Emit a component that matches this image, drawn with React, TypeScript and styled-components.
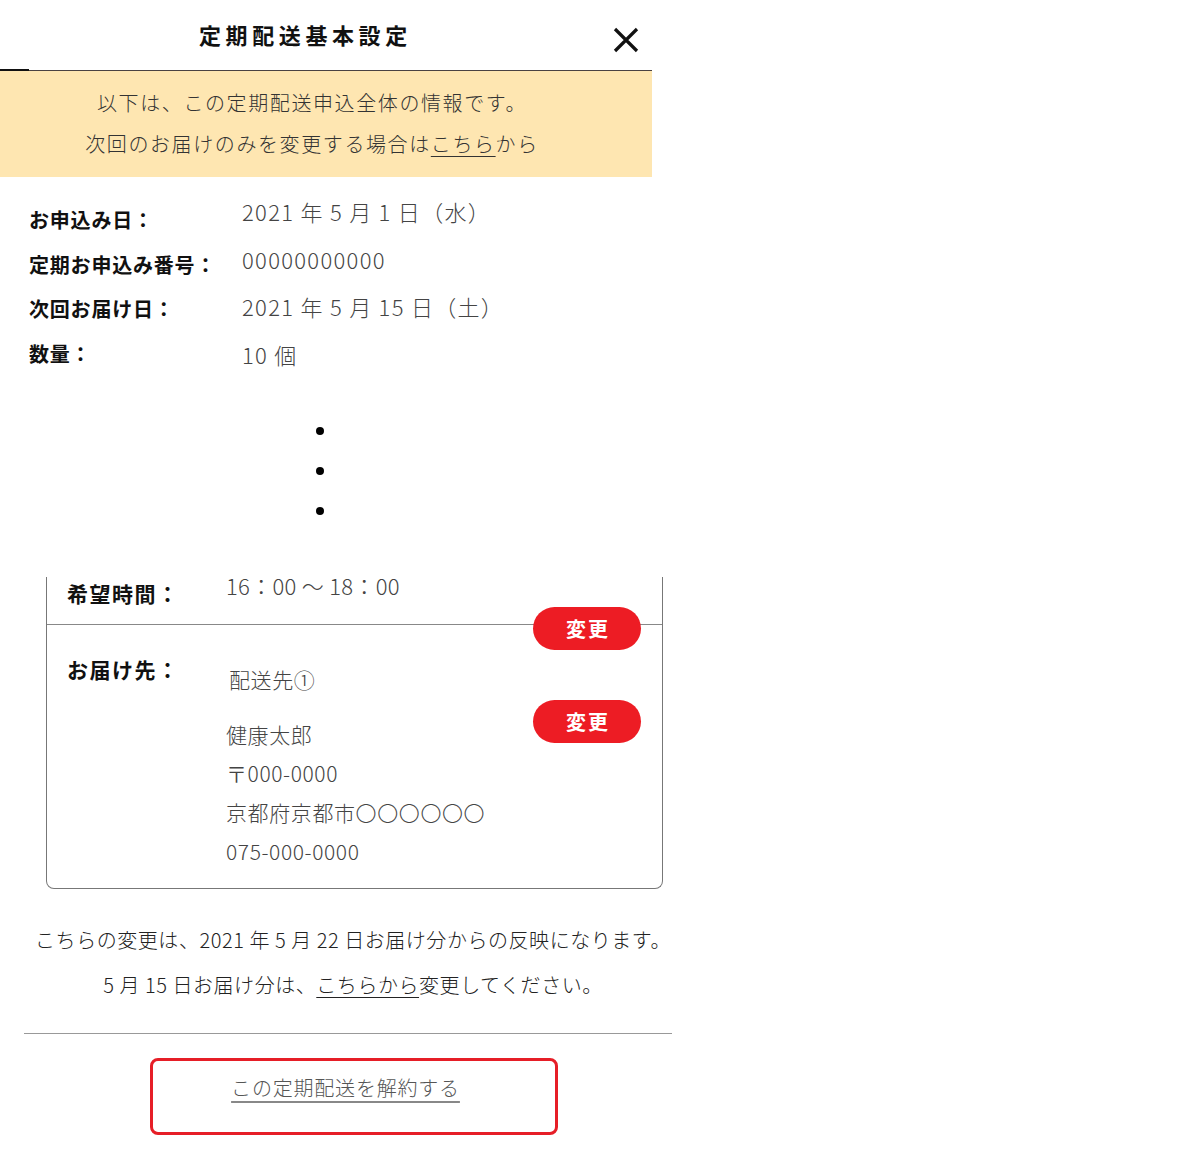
import React from "react";
import styled, { createGlobalStyle } from "styled-components";

const GlobalStyle = createGlobalStyle`
  html, body { margin: 0; padding: 0; background: #fff; }
  body {
    font-family: "Noto Sans CJK JP", "Noto Sans", sans-serif;
    color: #333;
  }
`;

const Page = styled.div`
  width: 706px;
  display: flex;
  flex-direction: column;
`;

const Header = styled.header`
  position: relative;
  box-sizing: border-box;
  width: 652px;
  height: 71px;
  display: flex;
  align-items: center;
  padding: 0 12px 2px 199px;
  border-bottom: 1px solid #4a4242;
  &::after {
    content: "";
    position: absolute;
    left: 0;
    bottom: -1px;
    width: 29px;
    height: 2px;
    background: #111;
  }
`;

const Title = styled.h1`
  margin: 0;
  font-size: 22px;
  font-weight: 700;
  letter-spacing: 4.6px;
  color: #111;
`;

const CloseButton = styled.button`
  margin-left: auto;
  width: 28px;
  height: 28px;
  padding: 0;
  border: none;
  background: transparent;
  display: flex;
  align-items: center;
  justify-content: center;
  margin-top: 12px;
`;

const Banner = styled.div`
  width: 652px;
  box-sizing: border-box;
  background: #fee6b1;
  padding: 11px 28px 13px 0;
  text-align: center;
  font-size: 20px;
  font-weight: 300;
  line-height: 41px;
  letter-spacing: 1.6px;
  color: #333;
`;

const Link = styled.span`
  text-decoration: underline;
  text-underline-offset: 4px;
  text-decoration-thickness: 1px;
`;

const Info = styled.div`
  display: flex;
  padding-left: 29px;
`;

const LabelCol = styled.div`
  width: 213px;
  padding-top: 21px;
  display: flex;
  flex-direction: column;
`;

const Label = styled.div`
  font-size: 20px;
  font-weight: 700;
  line-height: 44.7px;
  letter-spacing: 0.8px;
  color: #111;
  white-space: nowrap;
`;

const ValueCol = styled.div`
  padding-top: 11px;
  display: flex;
  flex-direction: column;
`;

const Value = styled.div`
  font-size: 22px;
  font-weight: 300;
  line-height: 47.7px;
  color: #444;
  letter-spacing: 1.3px;
  white-space: nowrap;
`;

const Dots = styled.div`
  display: flex;
  flex-direction: column;
  gap: 32px;
  margin: 48px 0 0 316px;
`;

const Dot = styled.span`
  width: 8px;
  height: 8px;
  border-radius: 50%;
  background: #000;
`;

const Panel = styled.section`
  margin: 62px 0 0 46px;
  width: 617px;
  box-sizing: border-box;
  border: 1px solid #777;
  border-top: none;
  border-radius: 0 0 8px 8px;
`;

const TimeRow = styled.div`
  position: relative;
  display: flex;
  height: 47px;
  padding-left: 20px;
  border-bottom: 1px solid #888;
`;

const RowLabel = styled.div<{ $top: number }>`
  width: 159px;
  margin-top: ${(p) => p.$top}px;
  font-size: 21px;
  font-weight: 700;
  line-height: 36px;
  letter-spacing: 1.5px;
  color: #111;
  white-space: nowrap;
`;

const TimeValue = styled.div`
  margin-top: -2px;
  font-size: 22px;
  font-weight: 300;
  line-height: 20px;
  letter-spacing: 0.3px;
  color: #444;
  white-space: nowrap;
`;

const ChangeButton = styled.button<{ $top: number }>`
  position: absolute;
  right: 21px;
  top: ${(p) => p.$top}px;
  width: 108px;
  height: 43px;
  border: none;
  border-radius: 22px;
  background: #ed1c24;
  color: #fff;
  font-family: "Noto Sans CJK JP", sans-serif;
  font-size: 20px;
  font-weight: 700;
  letter-spacing: 2px;
  padding: 0 0 0 2px;
`;

const AddressRow = styled.div`
  position: relative;
  display: flex;
  padding: 0 0 17px 20px;
`;

const AddressCol = styled.div`
  display: flex;
  flex-direction: column;
  padding-top: 35px;
`;

const AddressLine = styled.div<{ $first?: boolean }>`
  font-size: 21px;
  font-weight: 300;
  line-height: 39px;
  letter-spacing: 0.6px;
  color: #444;
  white-space: nowrap;
  padding-left: ${(p) => (p.$first ? 3 : 0)}px;
  margin-bottom: ${(p) => (p.$first ? 16 : 0)}px;
`;

const Notes = styled.div`
  margin-top: 28px;
  width: 706px;
  text-align: center;
  font-size: 20px;
  font-weight: 300;
  line-height: 45px;
  letter-spacing: 0.55px;
  color: #222;
  white-space: nowrap;
`;

const Divider = styled.hr`
  margin: 26px 0 0 24px;
  width: 648px;
  height: 0;
  border: none;
  border-top: 1.5px solid #999;
`;

const CancelBox = styled.div`
  margin: 24px 0 0 150px;
  width: 408px;
  height: 77px;
  box-sizing: border-box;
  border: 3.5px solid #e61e27;
  border-radius: 8px;
  padding: 13px 17px 0 0;
  text-align: center;
`;

const CancelLink = styled.a`
  font-size: 20px;
  font-weight: 300;
  line-height: 28px;
  letter-spacing: 0.8px;
  color: #555;
  text-decoration: underline;
  text-underline-offset: 5px;
  text-decoration-color: #888;
  text-decoration-thickness: 2px;
`;

export default function App() {
  return (
    <>
      <GlobalStyle />
      <Page>
        <Header>
          <Title>定期配送基本設定</Title>
          <CloseButton aria-label="閉じる">
            <svg width="26" height="26" viewBox="0 0 26 26">
              <path d="M2 2 L24 24 M24 2 L2 24" stroke="#111" strokeWidth="3.2" />
            </svg>
          </CloseButton>
        </Header>
        <Banner>
          <div>以下は、この定期配送申込全体の情報です。</div>
          <div>
            次回のお届けのみを変更する場合は<Link>こちら</Link>から
          </div>
        </Banner>
        <Info>
          <LabelCol>
            <Label>お申込み日：</Label>
            <Label>定期お申込み番号：</Label>
            <Label>次回お届け日：</Label>
            <Label>数量：</Label>
          </LabelCol>
          <ValueCol>
            <Value>2021 年 5 月 1 日（水）</Value>
            <Value>00000000000</Value>
            <Value>2021 年 5 月 15 日（土）</Value>
            <Value>10 個</Value>
          </ValueCol>
        </Info>
        <Dots>
          <Dot />
          <Dot />
          <Dot />
        </Dots>
        <Panel>
          <TimeRow>
            <RowLabel $top={-2}>希望時間：</RowLabel>
            <TimeValue>16：00 ～ 18：00</TimeValue>
            <ChangeButton $top={30}>変更</ChangeButton>
          </TimeRow>
          <AddressRow>
            <RowLabel $top={26}>お届け先：</RowLabel>
            <AddressCol>
              <AddressLine $first>配送先①</AddressLine>
              <AddressLine>健康太郎</AddressLine>
              <AddressLine>〒000-0000</AddressLine>
              <AddressLine>京都府京都市〇〇〇〇〇〇</AddressLine>
              <AddressLine>075-000-0000</AddressLine>
            </AddressCol>
            <ChangeButton $top={75}>変更</ChangeButton>
          </AddressRow>
        </Panel>
        <Notes>
          <div>こちらの変更は、2021 年 5 月 22 日お届け分からの反映になります。</div>
          <div>
            5 月 15 日お届け分は、<Link>こちらから</Link>変更してください。
          </div>
        </Notes>
        <Divider />
        <CancelBox>
          <CancelLink>この定期配送を解約する</CancelLink>
        </CancelBox>
      </Page>
    </>
  );
}
